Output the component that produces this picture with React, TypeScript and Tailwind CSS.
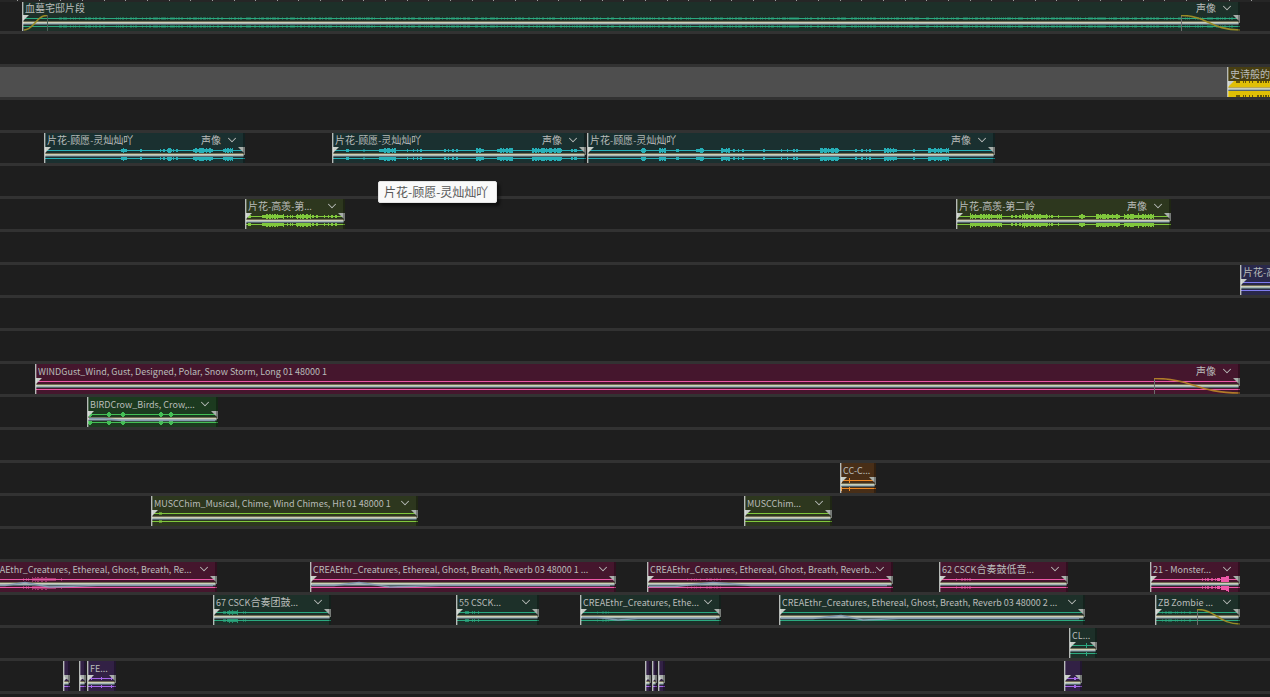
import {ChevronDown} from "lucide-react"
import {clsx} from "clsx"

type Tone = "teal" | "cyan" | "lime" | "indigo" | "pink" | "green" | "orange" | "violet" | "yellow"

// from, to, amplitude, opacity (px from the start of the clip)
type Burst = [number, number, number, number?]

type ClipData = {
  start: number
  end: number
  tone: Tone
  title?: string
  pan?: boolean
  menu?: boolean
  fadeIn?: number
  fadeOut?: number
  curve?: string
  bursts?: Burst[]
}

type TrackData = {
  selected?: boolean
  clips: ClipData[]
}

const tones: Record<Tone, {body: string; wave: string; fade: string}> = {
  teal: {body: "bg-[#1d3029]", wave: "#2baa80", fade: "#9a8a26"},
  cyan: {body: "bg-[#1a3030]", wave: "#27b0b8", fade: "#9a8a26"},
  lime: {body: "bg-[#2d371e]", wave: "#80c83c", fade: "#9a8a26"},
  indigo: {body: "bg-[#29284a]", wave: "#7f7cf0", fade: "#9a8a26"},
  pink: {body: "bg-[#45162d]", wave: "#ee58a8", fade: "#b07c28"},
  green: {body: "bg-[#1c3a1f]", wave: "#43c055", fade: "#9a8a26"},
  orange: {body: "bg-[#482e17]", wave: "#ee8a26", fade: "#9a8a26"},
  violet: {body: "bg-[#322145]", wave: "#a568e8", fade: "#9a8a26"},
  yellow: {body: "bg-[#483f12]", wave: "#5a4c08", fade: "#9a8a26"}
}

const tracks: TrackData[] = [
  {
    clips: [
      {
        start: 22,
        end: 1239,
        tone: "teal",
        title: "血墓宅邸片段",
        pan: true,
        menu: true,
        fadeIn: 25,
        fadeOut: 59,
        bursts: [[36, 1212, 1, 0.4]]
      }
    ]
  },
  {clips: []},
  {
    selected: true,
    clips: [{start: 1227, end: 1330, tone: "yellow", title: "史诗般的", bursts: [[8, 100, 1, 0.9]]}]
  },
  {clips: []},
  {
    clips: [
      {
        start: 44,
        end: 244,
        tone: "cyan",
        title: "片花-顾愿-灵灿灿吖",
        pan: true,
        menu: true,
        bursts: [[77, 83, 2], [96, 98, 1], [116, 134, 1], [123, 128, 2], [149, 169, 2], [179, 189, 2]]
      },
      {
        start: 332,
        end: 585,
        tone: "cyan",
        title: "片花-顾愿-灵灿灿吖",
        pan: true,
        menu: true,
        bursts: [[13, 18, 1], [31, 33, 1, 0.5], [47, 64, 2], [75, 91, 1], [111, 128, 1], [144, 152, 2], [165, 181, 2], [200, 230, 2], [239, 248, 1]]
      },
      {
        start: 587,
        end: 994,
        tone: "cyan",
        title: "片花-顾愿-灵灿灿吖",
        pan: true,
        menu: true,
        bursts: [[54, 59, 2], [72, 79, 2], [89, 92, 1], [108, 113, 1], [112, 117, 2], [134, 143, 2], [145, 158, 1], [176, 178, 1], [194, 211, 1], [233, 252, 2], [268, 285, 1], [297, 310, 2], [325, 329, 1], [341, 362, 2]]
      }
    ]
  },
  {clips: []},
  {
    clips: [
      {
        start: 245,
        end: 344,
        tone: "lime",
        title: "片花-高羡-第...",
        menu: true,
        bursts: [[3, 6, 1], [17, 39, 2], [42, 74, 1], [52, 66, 2], [77, 92, 1]]
      },
      {
        start: 956,
        end: 1170,
        tone: "lime",
        title: "片花-高羡-第二岭",
        pan: true,
        menu: true,
        bursts: [[14, 46, 2], [14, 15, 3], [54, 106, 1], [66, 92, 2], [68, 69, 3], [123, 129, 2], [140, 164, 2], [168, 198, 2], [182, 183, 3]]
      }
    ]
  },
  {clips: []},
  {clips: [{start: 1240, end: 1320, tone: "indigo", title: "片花-高羡"}]},
  {clips: []},
  {clips: []},
  {
    clips: [
      {
        start: 35,
        end: 1239,
        tone: "pink",
        title: "WINDGust_Wind, Gust, Designed, Polar, Snow Storm, Long 01 48000 1",
        pan: true,
        menu: true,
        fadeOut: 86
      }
    ]
  },
  {
    clips: [
      {
        start: 87,
        end: 217,
        tone: "green",
        title: "BIRDCrow_Birds, Crow,...",
        menu: true,
        curve: "M2 21.5H18L34 23.5H128",
        bursts: [[1, 5, 2], [20, 24, 2], [34, 38, 2], [72, 76, 2], [82, 86, 2]]
      }
    ]
  },
  {clips: []},
  {clips: [{start: 840, end: 875, tone: "orange", title: "CC-C...", bursts: [[1, 2, 2], [9, 10, 2]]}]},
  {
    clips: [
      {
        start: 151,
        end: 417,
        tone: "lime",
        title: "MUSCChim_Musical, Chime, Wind Chimes, Hit 01 48000 1",
        menu: true,
        bursts: [[8, 11, 1, 0.6]]
      },
      {start: 744, end: 831, tone: "lime", title: "MUSCChim...", menu: true}
    ]
  },
  {clips: []},
  {
    clips: [
      {
        start: -20,
        end: 216,
        tone: "pink",
        title: "CREAEthr_Creatures, Ethereal, Ghost, Breath, Re...",
        menu: true,
        curve: "M2 23.5H25L45 20.5L69 25L117 23.5H233",
        bursts: [[41, 52, 1, 0.5], [52, 75, 2, 0.5], [75, 85, 1, 0.5]]
      },
      {
        start: 310,
        end: 615,
        tone: "pink",
        title: "CREAEthr_Creatures, Ethereal, Ghost, Breath, Reverb 03 48000 1 ...",
        menu: true,
        curve: "M2 23.5H24L49 20.5L80 25L130 23.5H300"
      },
      {
        start: 647,
        end: 892,
        tone: "pink",
        title: "CREAEthr_Creatures, Ethereal, Ghost, Breath, Reverb...",
        menu: true,
        curve: "M2 24.5H28L66 20.5L104 23.5H240",
        bursts: [[40, 74, 1, 0.25]]
      },
      {
        start: 939,
        end: 1067,
        tone: "pink",
        title: "62 CSCK合奏鼓低音...",
        menu: true,
        bursts: [[16, 32, 1, 0.4]]
      },
      {
        start: 1150,
        end: 1239,
        tone: "pink",
        title: "21 - Monster...",
        menu: true,
        bursts: [[52, 66, 1, 0.7], [66, 71, 1], [71, 74, 2], [74, 77, 2], [76, 79, 3], [78, 79, 4]]
      }
    ]
  },
  {
    clips: [
      {
        start: 213,
        end: 330,
        tone: "teal",
        title: "67 CSCK合奏团鼓...",
        menu: true,
        bursts: [[9, 14, 1, 0.6], [14, 25, 2, 0.8], [25, 34, 1, 0.5]]
      },
      {start: 456, end: 538, tone: "teal", title: "55 CSCK...", menu: true, bursts: [[8, 25, 1, 0.7]]},
      {
        start: 580,
        end: 720,
        tone: "teal",
        title: "CREAEthr_Creatures, Ethe...",
        menu: true,
        curve: "M2 22.5H18L38 25L58 23.5H136",
        bursts: [[16, 30, 1, 0.3]]
      },
      {
        start: 779,
        end: 1084,
        tone: "teal",
        title: "CREAEthr_Creatures, Ethereal, Ghost, Breath, Reverb 03 48000 2 ...",
        menu: true,
        curve: "M2 23.5H34L62 20.5L84 25L120 23.5H300"
      },
      {
        start: 1155,
        end: 1239,
        tone: "teal",
        title: "ZB Zombie ...",
        menu: true,
        fadeOut: 43,
        bursts: [[4, 36, 1, 0.4]]
      }
    ]
  },
  {clips: [{start: 1069, end: 1096, tone: "teal", title: "CL...", bursts: [[17, 18, 2]]}]},
  {
    clips: [
      {start: 63, end: 69, tone: "violet"},
      {start: 79, end: 85, tone: "violet"},
      {start: 87, end: 115, tone: "violet", title: "FE...", bursts: [[4, 5, 1], [14, 15, 1], [24, 25, 1]]},
      {start: 645, end: 650, tone: "violet"},
      {start: 652, end: 656, tone: "violet"},
      {start: 658, end: 664, tone: "violet"},
      {start: 1064, end: 1081, tone: "violet", bursts: [[10, 12, 1]]}
    ]
  },
  {clips: []}
]

const ticks = Array.from({length: 60}, (_, i) => Math.round(17 + i * 21.65))

const noise = (n: number) => {
  const s = Math.sin(n * 127.1) * 43758.5453
  return s - Math.floor(s)
}

const burstHeight = (x: number, [from, to, amp]: Burst) => {
  if (to - from < 6) {
    const edge = to - from > 3 && (x === from || x === to - 1)
    return edge ? amp - 1 : amp
  }
  return amp === 1 ? Math.round(noise(x + from)) : 1 + Math.round(noise(x + from) * (amp - 1))
}

const wavePath = (center: number, burst: Burst) => {
  let d = ""
  for (let x = burst[0]; x < burst[1]; x++) {
    const h = burstHeight(x, burst)
    if (h > 0) d += `M${x} ${center - h}h1v${h * 2 + 1}h-1z`
  }
  return d
}

const Waveform = function Waveform({clip}: {clip: ClipData}) {
  const width = clip.end - clip.start + 1
  const {wave, fade} = tones[clip.tone]
  const filled = clip.tone === "yellow"
  const out = width - (clip.fadeOut ?? 0)
  return (
    <svg width={width} height={16} viewBox={`0 14 ${width} 16`} className="block" aria-hidden="true">
      <g shapeRendering="crispEdges">
        {filled && <rect x={0} y={14} width={width} height={16} fill="#dfbf06" />}
        {[17, 25].map((y) => (
          <g key={y} fill={wave}>
            {!filled && <rect x={1} y={y} width={width - 1} height={1} />}
            {clip.bursts?.map((burst, i) => (
              <path
                key={i}
                d={wavePath(filled ? (y === 17 ? 14 : 29) : y, burst)}
                opacity={burst[3] ?? 1}
              />
            ))}
          </g>
        ))}
        <rect x={1} y={20} width={width - 2} height={1} fill={filled ? "#b5a55a" : "#6e6a52"} />
        <rect x={1} y={21} width={width - 2} height={1} fill="#ccd0b8" />
        <rect x={1} y={22} width={width - 2} height={1} fill="#a3b3b5" />
        <rect x={1} y={23} width={width - 2} height={1} fill="#53666d" />
      </g>
      {clip.curve && <path d={clip.curve} fill="none" stroke="#8299ae" strokeWidth={1.5} />}
      {clip.fadeIn && (
        <>
          <path d={`M${clip.fadeIn + 0.5} 14v16`} stroke="#4b6158" />
          <path
            d={`M2 29C12 29 14 14.5 ${clip.fadeIn} 14.5`}
            fill="none"
            stroke={fade}
            strokeWidth={1.6}
          />
        </>
      )}
      {clip.fadeOut && (
        <>
          <path d={`M${out + 0.5} 14v16`} stroke="#6d6d6d" />
          <path
            d={`M${out} 14.5C${out + clip.fadeOut * 0.45} 14.5 ${out + clip.fadeOut * 0.5} 29 ${width} 29`}
            fill="none"
            stroke={fade}
            strokeWidth={1.6}
          />
        </>
      )}
      <path d="M0 14h7l-7 7z" fill="#c8cec8" />
      <path d={`M${width} 14h-7l6 6v2h1z`} fill="#a9afab" />
    </svg>
  )
}

// Latin runs are set a size smaller than the Chinese ones
const Title = function Title({text}: {text: string}) {
  return (
    <h2 className="h-3.5 flex-1 overflow-hidden whitespace-nowrap">
      {text.split(/([\u4e00-\u9fff]+)/).map((run, i) =>
        i % 2 === 0 ? (
          <span key={i} className="text-[9px]">
            {run}
          </span>
        ) : (
          run
        )
      )}
    </h2>
  )
}

const Clip = function Clip({clip}: {clip: ClipData}) {
  return (
    <article
      className={clsx("absolute inset-y-0 overflow-hidden", tones[clip.tone].body)}
      style={{left: clip.start, width: clip.end - clip.start + 1}}>
      <header className={clsx("flex h-3.5 items-center pl-[3px]", clip.menu && "pr-[9px]")}>
        {clip.title && <Title text={clip.title} />}
        {clip.pan && (
          <button type="button" className="mr-[7px] shrink-0">
            声像
          </button>
        )}
        {clip.menu && (
          <button type="button" aria-label="菜单" className="shrink-0">
            <ChevronDown className="-mx-[3px] size-3.5" strokeWidth={1.75} />
          </button>
        )}
      </header>
      <Waveform clip={clip} />
      <span className="absolute inset-y-0 left-0 w-px bg-[#b5bab7]" />
      <span className="absolute inset-y-0 left-px w-px bg-white/25" />
      <span className="absolute inset-y-0 right-0 w-0.5 bg-black/30" />
    </article>
  )
}

const App = function App() {
  return (
    <main className="relative h-screen overflow-hidden bg-[#1e1e1e] font-['Noto_Sans_CJK_SC',sans-serif] text-[10px] leading-[14px] text-[#b9bcba]">
      <div className="relative z-10 -mb-px h-0.5 bg-[#262626]">
        {ticks.map((x) => (
          <span key={x} className="absolute top-0 h-px w-px bg-[#9c9c9c]" style={{left: x}} />
        ))}
      </div>
      {tracks.map((track, i) => (
        <section
          key={i}
          className={clsx(
            "relative box-content h-[30px] overflow-hidden border-b-3 border-[#323232]",
            track.selected && "bg-[#4e4e4e]"
          )}>
          {track.clips.map((clip) => (
            <Clip key={clip.start} clip={clip} />
          ))}
        </section>
      ))}
      <div
        role="tooltip"
        className="absolute top-[181px] left-[378px] rounded-xs border border-[#e4e4e4] bg-[#f9f9f9] pr-2 pl-[5px] text-xs leading-5 text-[#575757] shadow-[3px_3px_3px_rgba(0,0,0,0.5)]">
        片花-顾愿-灵灿灿吖
      </div>
    </main>
  )
}

export default App
